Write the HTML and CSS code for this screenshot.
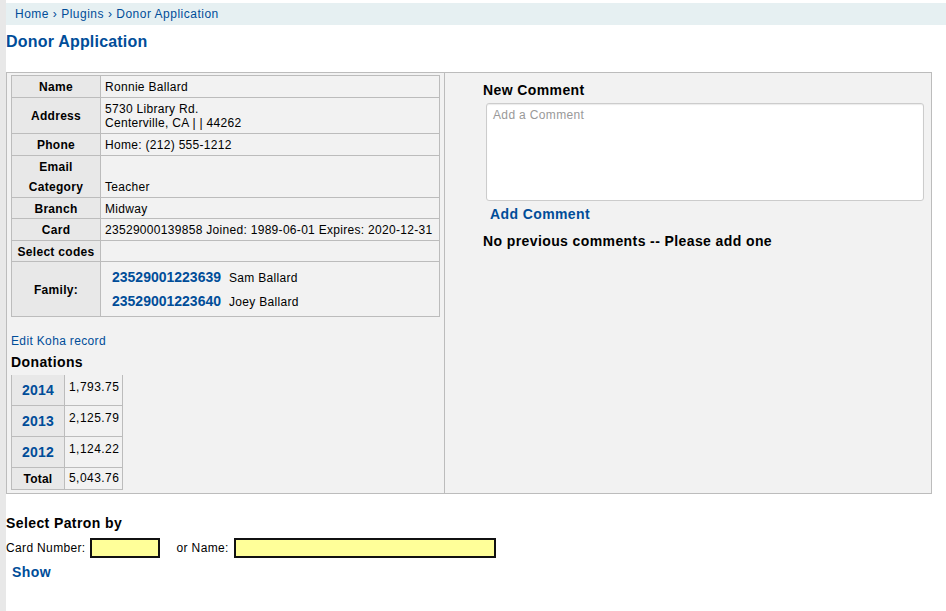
FILE: index.html
```html
<!DOCTYPE html>
<html>
<head>
<meta charset="utf-8">
<title>Donor Application</title>
<link rel="stylesheet" href="styles.css">
</head>
<body>
<div class="page">
  <div class="breadcrumbs"><a href="#">Home</a> › <a href="#">Plugins</a> › <a href="#">Donor Application</a></div>
  <h1 class="title">Donor Application</h1>

  <div class="panel">
    <div class="col-left">
      <table class="info">
        <tr><th>Name</th><td>Ronnie Ballard</td></tr>
        <tr><th>Address</th><td>5730 Library Rd.<br>Centerville, CA | | 44262</td></tr>
        <tr><th>Phone</th><td>Home: (212) 555-1212</td></tr>
        <tr class="noline"><th>Email</th><td></td></tr>
        <tr><th>Category</th><td>Teacher</td></tr>
        <tr class="short"><th>Branch</th><td>Midway</td></tr>
        <tr><th>Card</th><td>23529000139858 Joined: 1989-06-01 Expires: 2020-12-31</td></tr>
        <tr class="short"><th>Select codes</th><td></td></tr>
        <tr><th>Family:</th><td class="family">
          <div class="family-line"><a class="strong" href="#">23529001223639</a><span>Sam Ballard</span></div>
          <div class="family-line"><a class="strong" href="#">23529001223640</a><span>Joey Ballard</span></div>
        </td></tr>
      </table>

      <a class="edit-link" href="#">Edit Koha record</a>
      <h3 class="subhead">Donations</h3>
      <table class="donations">
        <tr><th><a href="#">2014</a></th><td>1,793.75</td></tr>
        <tr><th><a href="#">2013</a></th><td>2,125.79</td></tr>
        <tr><th><a href="#">2012</a></th><td>1,124.22</td></tr>
        <tr class="total"><th>Total</th><td>5,043.76</td></tr>
      </table>
    </div>

    <div class="col-right">
      <h3 class="subhead first">New Comment</h3>
      <textarea class="comment-box" placeholder="Add a Comment"></textarea>
      <a class="add-comment" href="#">Add Comment</a>
      <h3 class="subhead nocomments">No previous comments -- Please add one</h3>
    </div>
  </div>

  <h3 class="subhead select-head">Select Patron by</h3>
  <div class="select-row">
    <label>Card Number:</label><input class="card-input" type="text">
    <label class="name-label">or Name:</label><input class="name-input" type="text">
  </div>
  <a class="show-link" href="#">Show</a>
</div>
</body>
</html>
```

FILE: styles.css
```css
html, body {
  margin: 0;
  padding: 0;
  background: #ffffff;
}
body {
  font-family: "Liberation Sans", Arial, sans-serif;
  font-size: 12px;
  letter-spacing: 0.35px;
  color: #000;
}
a {
  color: #004d99;
  text-decoration: none;
}
.page {
  border-left: 6px solid #e8e8e8;
  min-height: 611px;
  box-sizing: border-box;
  padding-top: 3px;
}
.breadcrumbs {
  background: #e6f0f2;
  height: 22px;
  line-height: 22px;
  padding-left: 9px;
  font-size: 12px;
  letter-spacing: 0.5px;
  color: #004d99;
}
.title {
  margin: 7px 0 0 0;
  font-size: 16px;
  line-height: 19px;
  font-weight: bold;
  letter-spacing: 0.2px;
  color: #004d99;
}
.panel {
  margin-top: 21px;
  width: 926px;
  box-sizing: border-box;
  border: 1px solid #bcbcbc;
  background: #f2f2f2;
  display: flex;
}
.col-left {
  width: 438px;
  box-sizing: border-box;
  border-right: 1px solid #bcbcbc;
  padding: 2px 4px 3px 4px;
}
.col-right {
  flex: 1;
  padding: 9px 0 0 38px;
  display: flex;
  flex-direction: column;
  align-items: flex-start;
}
table {
  border-collapse: collapse;
}
.info {
  width: 429px;
}
.info th, .info td {
  border: 1px solid #bcbcbc;
  padding: 4px 4px 3px 4px;
  line-height: 14px;
  font-size: 12px;
  white-space: nowrap;
}
.info th {
  background: #e8e8e8;
  width: 80px;
  font-weight: bold;
  text-align: center;
  letter-spacing: 0.3px;
}
.info td {
  background: #f2f2f2;
  text-align: left;
  letter-spacing: 0.3px;
}
.info tr.noline th, .info tr.noline td {
  border-bottom-style: hidden;
  padding-bottom: 2px;
}
.info tr.short th, .info tr.short td {
  padding-bottom: 2px;
}
.info td.family {
  padding-top: 3px;
  padding-bottom: 3px;
}
.family-line {
  padding: 5px 0 5px 7px;
  height: 14px;
  line-height: 14px;
}
.family-line .strong {
  font-weight: bold;
  font-size: 14px;
  line-height: 14px;
  letter-spacing: 0;
  margin-right: 8px;
}
.edit-link {
  display: block;
  margin-top: 17px;
  line-height: 14px;
  font-size: 12px;
}
.subhead {
  margin: 0;
  font-size: 14px;
  line-height: 16px;
  font-weight: bold;
  letter-spacing: 0.4px;
}
.col-left .subhead {
  margin-top: 6px;
}
.donations {
  margin-top: 5px;
}
.donations th, .donations td {
  border: 1px solid #bcbcbc;
  height: 30px;
  padding: 0;
}
.donations tr:first-child th, .donations tr:first-child td {
  border-top-style: hidden;
}
.donations th {
  background: #e8e8e8;
  width: 52px;
  font-size: 14px;
  font-weight: bold;
  text-align: center;
  vertical-align: middle;
  letter-spacing: 0.2px;
}
.donations td {
  width: 49px;
  padding: 5px 3px 0 4px;
  vertical-align: top;
  font-size: 12px;
  line-height: 14px;
  height: 25px;
  letter-spacing: 0.45px;
}
.donations tr.total th, .donations tr.total td {
  height: 21px;
  font-size: 12px;
}
.donations tr.total td {
  height: 17px;
  padding-top: 3px;
}
.comment-box {
  margin: 5px 0 0 3px;
  width: 438px;
  height: 98px;
  box-sizing: border-box;
  border: 1px solid #cccccc;
  border-radius: 3px;
  box-shadow: inset 0 1px 1px rgba(0,0,0,0.08);
  background: #fff;
  padding: 4px 6px;
  font-family: "Liberation Sans", Arial, sans-serif;
  font-size: 12px;
  letter-spacing: 0.35px;
  resize: none;
}
.comment-box::placeholder {
  color: #999;
}
.add-comment {
  margin: 5px 0 0 7px;
  font-size: 14px;
  line-height: 16px;
  font-weight: bold;
  letter-spacing: 0.4px;
}
.nocomments {
  margin-top: 11px;
}
.select-head {
  margin-top: 21px;
}
.select-row {
  margin-top: 7px;
  display: flex;
  align-items: center;
  height: 20px;
}
.select-row label {
  font-size: 12px;
  margin-right: 4px;
}
.select-row .name-label {
  margin-left: 17px;
  margin-right: 5px;
}
.select-row input {
  box-sizing: border-box;
  height: 20px;
  border: 2px solid #111;
  background: #ffff99;
  padding: 0 3px;
  margin: 0;
  font-size: 12px;
}
.card-input {
  width: 70px;
}
.name-input {
  width: 262px;
}
.show-link {
  display: inline-block;
  margin: 6px 0 0 6px;
  font-size: 14px;
  line-height: 16px;
  font-weight: bold;
  letter-spacing: 0.4px;
}
```
